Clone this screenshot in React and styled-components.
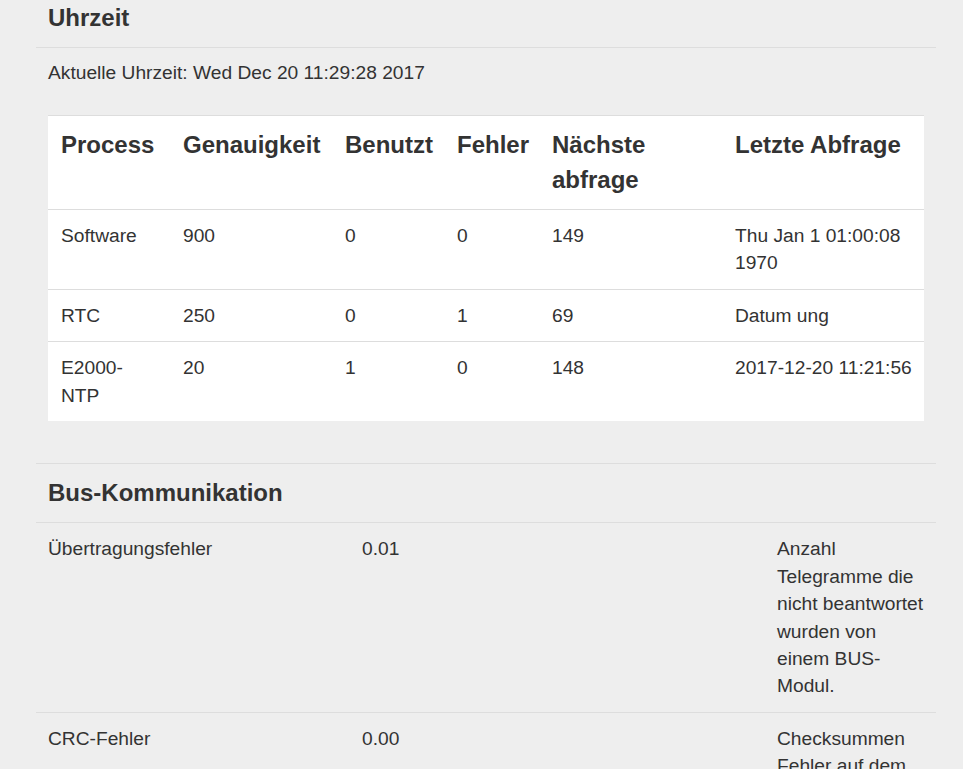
import styled, { createGlobalStyle } from "styled-components";

const Global = createGlobalStyle`
    body {
        margin: 0;
        background: #eeeeee;
        color: #333333;
        font-family: "Liberation Sans", Arial, sans-serif;
        font-size: 19.2px;
        line-height: 1.42857;
    }
`;

const Page = styled.main`
    width: 900px;
    margin-left: 36px;
`;

const Section = styled.section`
    border-top: ${(p) => (p.$first ? "none" : "1px solid #dddddd")};
    padding-bottom: ${(p) => p.$bottom || "0"};
`;

const Heading = styled.h3`
    margin: 0;
    padding: ${(p) => p.$top || "12px"} 12px 12px;
    font-size: 24px;
    font-weight: 700;
    line-height: 1.42857;
    border-bottom: 1px solid #dddddd;
`;

const Body = styled.div`
    padding: 11px 12px 0;

    p {
        margin: 0;
    }
`;

const Table = styled.table`
    width: 876px;
    margin-top: 28.6px;
    border-collapse: collapse;
    table-layout: fixed;
    background: #ffffff;
    border-top: 1px solid #dddddd;

    th,
    td {
        padding: 12px 12px 12px 13px;
        text-align: left;
        vertical-align: top;
    }

    th {
        font-size: 24px;
        line-height: 1.42857;
        padding-right: 0;
    }

    td:last-child {
        padding-right: 4px;
    }

    tr + tr td,
    thead + tbody tr:first-child td {
        border-top: 1px solid #dddddd;
    }
`;

const Row = styled.div`
    display: grid;
    grid-template-columns: 314px 415px 171px;
    border-bottom: 1px solid #dddddd;

    div {
        padding: 12px;
    }
`;

const columns = [122, 162, 112, 95, 183, 202];

const processes = [
    ["Software", "900", "0", "0", "149", "Thu Jan 1 01:00:08 1970"],
    ["RTC", "250", "0", "1", "69", "Datum ung"],
    ["E2000-NTP", "20", "1", "0", "148", "2017-12-20 11:21:56"],
];

const bus = [
    ["Übertragungsfehler", "0.01", "Anzahl Telegramme die nicht beantwortet wurden von einem BUS-Modul."],
    ["CRC-Fehler", "0.00", "Checksummen Fehler auf dem BUS erkannt."],
];

export default function App() {
    return (
        <>
            <Global />
            <Page>
                <Section $first $bottom="42px">
                    <Heading $top="1px">Uhrzeit</Heading>
                    <Body>
                        <p>Aktuelle Uhrzeit: Wed Dec 20 11:29:28 2017</p>
                        <Table>
                            <colgroup>
                                {columns.map((w, i) => (
                                    <col key={i} width={w} />
                                ))}
                            </colgroup>
                            <thead>
                                <tr>
                                    <th>Process</th>
                                    <th>Genauigkeit</th>
                                    <th>Benutzt</th>
                                    <th>Fehler</th>
                                    <th>Nächste abfrage</th>
                                    <th>Letzte Abfrage</th>
                                </tr>
                            </thead>
                            <tbody>
                                {processes.map((r) => (
                                    <tr key={r[0]}>
                                        {r.map((c, i) => (
                                            <td key={i}>{c}</td>
                                        ))}
                                    </tr>
                                ))}
                            </tbody>
                        </Table>
                    </Body>
                </Section>
                <Section>
                    <Heading>Bus-Kommunikation</Heading>
                    {bus.map((r) => (
                        <Row key={r[0]}>
                            <div>{r[0]}</div>
                            <div>{r[1]}</div>
                            <div>{r[2]}</div>
                        </Row>
                    ))}
                </Section>
            </Page>
        </>
    );
}
